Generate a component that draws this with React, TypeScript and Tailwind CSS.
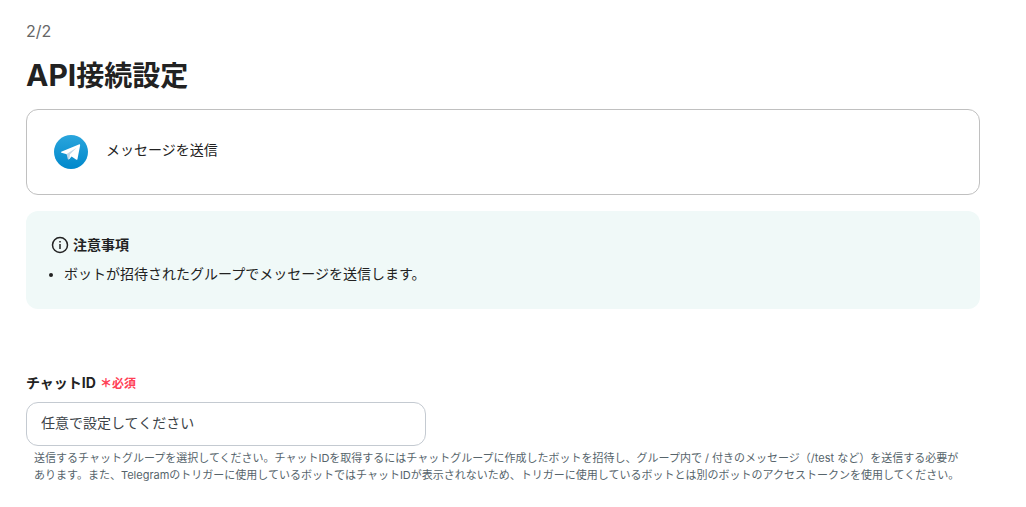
const TelegramIcon = () => (
  <svg viewBox="0 0 34 34" className="size-[34px] shrink-0" aria-hidden="true">
    <defs>
      <linearGradient id="telegram" x1="0" y1="0" x2="0" y2="1">
        <stop offset="0" stopColor="#2aa5dc" />
        <stop offset="1" stopColor="#0088cb" />
      </linearGradient>
    </defs>
    <circle cx="17" cy="17" r="17" fill="url(#telegram)" />
    <path
      d="M7.2 16.8 L24.8 9.5 Q26.3 9 26.1 10.4 L23.5 24 Q23.2 25.3 22 24.6 L17.6 21.6 L15.2 24.2 L12.8 19.2 L7.4 17.7 Q6.7 17.1 7.2 16.8 Z"
      fill="#ffffff"
    />
    <path
      d="M12.6 19.1 L22.6 12.8 L16 19.2 L15.6 22.6 L14.6 24.8 Q14 24.8 13.8 24 Z"
      fill="#c3d7e6"
    />
  </svg>
);

const InfoIcon = () => (
  <svg
    viewBox="0 0 18 18"
    className="size-[18px] shrink-0"
    fill="none"
    aria-hidden="true"
  >
    <circle cx="9" cy="9" r="7.5" stroke="#222222" strokeWidth="1.5" />
    <path d="M9 8 V13" stroke="#222222" strokeWidth="1.5" />
    <path d="M9 5 V6.5" stroke="#222222" strokeWidth="1.5" />
  </svg>
);

const App = () => {
  return (
    <main className="bg-white pt-[19px] pr-[46px] pb-5 pl-[26px] font-[Inter,'Noto_Sans_CJK_JP',sans-serif] text-sm text-[#222222]">
      <p className="text-base leading-6 text-[#666666]">2/2</p>
      <h1 className="mt-3 text-[28px] leading-10 font-bold">
        <span className="text-[30px]">API</span>接続設定
      </h1>

      <section className="mt-[13px] flex h-[86px] items-center gap-[18px] rounded-xl border border-[#c0c0c0] px-[27px]">
        <TelegramIcon />
        <p className="pb-1">メッセージを送信</p>
      </section>

      <section className="mt-4 rounded-xl bg-[#f0f9f8] px-[25px] py-6">
        <h2 className="flex items-center gap-1 leading-5 font-bold">
          <InfoIcon />
          注意事項
        </h2>
        <ul className="mt-2 list-disc pl-[13px] leading-[22px] marker:text-xs">
          <li>ボットが招待されたグループでメッセージを送信します。</li>
        </ul>
      </section>

      <div className="mt-16">
        <label
          htmlFor="chat-id"
          className="flex items-baseline gap-1 leading-5 font-bold"
        >
          チャットID
          <span className="flex items-baseline text-xs leading-5 text-[#ff4055]">
            <span className="font-black">＊</span>
            必須
          </span>
        </label>
        <input
          id="chat-id"
          type="text"
          aria-describedby="chat-id-help"
          placeholder="任意で設定してください"
          className="mt-2 block h-11 w-full max-w-[400px] rounded-xl border border-[#c4cad1] px-[14px] pb-1 placeholder:text-[#3c4348] focus:outline-none"
        />
        <p
          id="chat-id-help"
          className="mt-1 pr-5 pl-2 text-[11px] leading-[17px] text-[#56646b]"
        >
          送信するチャットグループを選択してください。チャットIDを取得するにはチャットグループに作成したボットを招待し、グループ内で
          / 付きのメッセージ（/test
          など）を送信する必要があります。また、Telegramのトリガーに使用しているボットではチャットIDが表示されないため、トリガーに使用しているボットとは別のボットのアクセストークンを使用してください。
        </p>
      </div>
    </main>
  );
};

export default App;
